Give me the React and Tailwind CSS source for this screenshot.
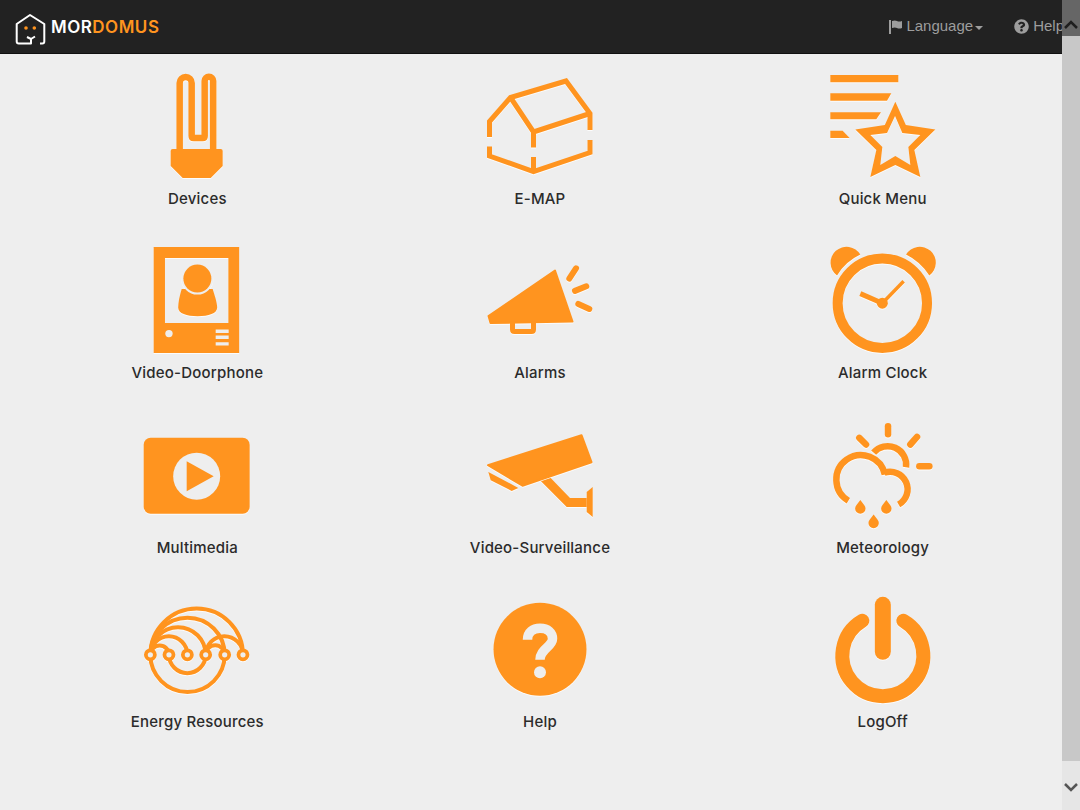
import { FaQuestionCircle } from 'react-icons/fa';

const ORANGE = '#ff941f';

// Each icon's viewBox origin is the spot its 140x124 box takes on the page
function Icon({ box, children }) {
  return (
    <svg
      width="140"
      height="124"
      viewBox={`${box[0]} ${box[1]} 140 124`}
      fill={ORANGE}
      stroke="none"
      className="block [filter:drop-shadow(0_1px_0_rgba(255,255,255,0.8))]"
    >
      {children}
    </svg>
  );
}

const Devices = () => (
  <Icon box={[127.33, 60]}>
    <path d="M180 152V83a6 6 0 0 1 12 0v53q0 2 2 2h9q2 0 2-2V81a4.25 4.25 0 0 1 8.5 0v71" fill="none" stroke={ORANGE} strokeWidth="6.500" />
    <path d="M173 149h48q2 0 2 2v15l-12 12h-28l-12-12v-15q0-2 2-2z" />
  </Icon>
);

const EMap = () => (
  <Icon box={[470, 60]}>
    <g fill="none" stroke={ORANGE} strokeWidth="5">
      <path d="M489.5 137v-15.5l21-24L566 81l24 32.5V130" />
      <path d="M510.5 97.500L533.500 132 590 113.500" />
      <path d="M533.500 131v16.500" />
      <path d="M489.500 146.500v9.500l44 15.500 56.500-19V140" />
      <path d="M533.500 157v15" />
    </g>
  </Icon>
);

const QuickMenu = () => (
  <Icon box={[812.67, 60]}>
    <path d="M830 75h68v7.300h-68z" />
    <path d="M830 93.300h61l-4.300 7.400H830z" />
    <path d="M830 112.300h50.700l-4.700 7H830z" />
    <path d="M830 130.700h12.300l7 7.300H830z" />
    <path
      fillRule="evenodd"
      d="M895 101.700l10.500 23.300 29.500 4.500-21 20.500 6 27-25-12-25 12 6-27-21-20.500 29.500-4.500zM894.700 116l-8 17-16.700 2 12 12-2 18 15-9 15 9-2-18 12-12-18-2z"
    />
  </Icon>
);

const VideoDoorphone = () => (
  <Icon box={[127.33, 234.4]}>
    <path fillRule="evenodd" d="M154 247.500h85.500v106H154zM165.300 258.500v65h63.400v-65z" />
    <path d="M182 289.500C180 296 178.500 303 178.500 308c0 6 8.500 8.700 19.500 8.700s19.500-2.700 19.500-8.700c0-5-2.500-12-4.500-18.500z" />
    <circle cx="197.700" cy="279" r="16" fill="#eee" />
    <circle cx="197.700" cy="279" r="14" />
    <circle cx="169.300" cy="334" r="3.700" fill="#eee" />
    <path d="M216 330h13v3.300h-13zM216 336h13v3.300h-13zM216 342.700h13v3.300h-13z" fill="#eee" />
  </Icon>
);

const Alarms = () => (
  <Icon box={[470, 234.4]}>
    <path d="M488.500 316.500L555 271l17.500 51-82 1.500z" stroke={ORANGE} strokeWidth="2" strokeLinejoin="round" />
    <path d="M512.500 323v7q0 2 2 2h17q2 0 2-2v-7" fill="none" stroke={ORANGE} strokeWidth="5" />
    <g fill="none" stroke={ORANGE} strokeWidth="6" strokeLinecap="round">
      <path d="M576 268.700L569.300 279" />
      <path d="M586.300 286.700L575 291.300" />
      <path d="M589.300 309.300L578.300 304.300" />
    </g>
  </Icon>
);

const AlarmClock = () => (
  <Icon box={[812.67, 234.4]}>
    <circle cx="882" cy="303.600" r="44.700" fill="none" stroke={ORANGE} strokeWidth="10" />
    <path d="M836.700 276A16 16 0 1 1 860 255Q845 262 836.700 276z" />
    <path d="M929 276A16 16 0 1 0 905.700 255Q920 262 929 276z" />
    <path d="M882 303.600L903.300 281.700" stroke={ORANGE} strokeWidth="3.500" fill="none" />
    <path d="M882 303.600L860 294" stroke={ORANGE} strokeWidth="5" fill="none" />
    <circle cx="882" cy="303.600" r="5.500" />
  </Icon>
);

const Multimedia = () => (
  <Icon box={[127.33, 408.8]}>
    <rect x="144" y="437.500" width="106" height="76" rx="7" />
    <circle cx="197" cy="476" r="23.500" fill="#eee" />
    <path d="M187 461l27 15-27 15z" />
  </Icon>
);

const Camera = () => (
  <Icon box={[470, 408.8]}>
    <path d="M488 465l93.500-30 10 27-69 23.500z" stroke={ORANGE} strokeWidth="2" strokeLinejoin="round" />
    <path d="M488.300 471.700l30 16-6.600 3-21-10.700z" />
    <path d="M541 481l9.700-3.300 19.300 20h16.700v9h-20z" />
    <path d="M586.700 491.700l6-5v30l-6-5z" />
  </Icon>
);

const drops = [[860, 508.300], [886, 508.300], [873.300, 522.700]];

const Meteorology = () => (
  <Icon box={[812.67, 408.8]}>
    <g fill="none" stroke={ORANGE} strokeWidth="6.500" strokeLinecap="round">
      <path d="M887.700 426v8" />
      <path d="M859 437.700l6.700 6.600" />
      <path d="M916.700 436.700l-6.700 7.600" />
      <path d="M919 466h10" />
    </g>
    <g fill="none" stroke={ORANGE} strokeWidth="6.500">
      <path d="M873.300 452.500A18.500 18.500 0 0 1 905.700 467" />
      <path d="M848 500.500A24.500 24.500 0 1 1 884.500 474.500" />
      <path d="M884 472.500A17.500 17.500 0 0 1 898.300 504.300" />
    </g>
    {drops.map(([x, y]) => (
      <path key={x} transform={`translate(${x} ${y})`} d="M0-8.500L3.800-3.500A5.200 5.200 0 1 1-3.800-3.500z" />
    ))}
  </Icon>
);

const nodes = [150.7, 169.3, 187.7, 206, 225, 243.3];

const Energy = () => (
  <Icon box={[127.33, 583.2]}>
    <g fill="none" stroke={ORANGE} strokeWidth="4">
      <path d="M150.700 655A46.300 46.300 0 0 1 243.300 655" />
      <path d="M150.700 655A37.150 37.150 0 0 1 225 655" />
      <path d="M150.700 655A27.650 27.650 0 0 1 206 655" />
      <path d="M150.700 655A18.500 18.500 0 0 1 187.700 655" />
      <path d="M150.700 655A9.300 9.300 0 0 1 169.300 655" />
      <path d="M150.700 655A37.150 37.150 0 0 0 225 655" />
      <path d="M169.300 655A18.350 18.350 0 0 0 206 655" />
      <path d="M206 655A18.650 18.650 0 0 1 243.300 655" />
      <path d="M206 655A9.500 9.500 0 0 1 225 655" />
      {nodes.map((x) => (
        <circle key={x} cx={x} cy="655" r="4.500" fill="#eee" strokeWidth="3.800" />
      ))}
    </g>
  </Icon>
);

const HelpIcon = () => (
  <Icon box={[470, 583.2]}>
    <circle cx="540" cy="649.500" r="46.500" />
    <path d="M527.500 640c0-8 5.500-11.500 12.500-11.500 8 0 12.500 4.500 12.500 10.500 0 8-12.500 10-12.500 21" fill="none" stroke="#eee" strokeWidth="9.500" />
    <circle cx="540" cy="672.500" r="6" fill="#eee" />
  </Icon>
);

const LogOff = () => (
  <Icon box={[812.67, 583.2]}>
    <path d="M862 621A40.500 40.500 0 1 0 903 621" fill="none" stroke={ORANGE} strokeWidth="14" strokeLinecap="round" />
    <path d="M882.500 605v47" fill="none" stroke={ORANGE} strokeWidth="16" strokeLinecap="round" />
  </Icon>
);

const tiles = [
  { name: 'Devices', icon: Devices },
  { name: 'E-MAP', icon: EMap },
  { name: 'Quick Menu', icon: QuickMenu },
  { name: 'Video-Doorphone', icon: VideoDoorphone },
  { name: 'Alarms', icon: Alarms },
  { name: 'Alarm Clock', icon: AlarmClock },
  { name: 'Multimedia', icon: Multimedia },
  { name: 'Video-Surveillance', icon: Camera },
  { name: 'Meteorology', icon: Meteorology },
  { name: 'Energy Resources', icon: Energy },
  { name: 'Help', icon: HelpIcon },
  { name: 'LogOff', icon: LogOff },
];

function Logo() {
  return (
    <svg width="46" height="46" viewBox="0 0 46 46" className="shrink-0" fill="none">
      <path
        d="M40 39.500h2.300q2 0 2-2V20L30 11 16.700 20v17.500q0 2 2 2H31V35l4-2.500M31 35l-4-2"
        stroke="#fff"
        strokeWidth="2"
        strokeLinejoin="round"
      />
      <circle cx="26" cy="24" r="1.800" fill={ORANGE} />
      <circle cx="34.300" cy="24" r="1.800" fill={ORANGE} />
    </svg>
  );
}

function Header() {
  return (
    <header className="flex h-[54px] items-center bg-[#222] border-b border-[#101010] font-['Liberation_Sans',sans-serif] text-[15px] text-[#9d9d9d]">
      <div className="flex items-center">
        <Logo />
        <span className="ml-[5px] mt-[2px] font-['Inter',sans-serif] text-[17px] font-semibold tracking-[0.5px] text-white">
          MOR<span className="text-[#ff941f]">DOMUS</span>
        </span>
      </div>
      <nav className="ml-auto mr-[16px] flex items-center">
        <svg width="14" height="14" viewBox="0 0 14 14" fill="#9d9d9d" className="mr-[3px]">
          <path d="M0 0h2v14H0zM3 1q3-1 5 0t5 0v7q-3 1-5 0t-5 0z" />
        </svg>
        <span>Language</span>
        <span className="ml-[2px] mt-[2px] h-0 w-0 border-x-4 border-t-4 border-x-transparent border-t-[#9d9d9d]" />
        <FaQuestionCircle className="ml-[31px] mr-[4px] text-[15px]" />
        <span>Help</span>
      </nav>
    </header>
  );
}

function Scrollbar() {
  return (
    <div className="absolute inset-y-0 right-0 flex w-[18px] flex-col bg-[#e6e6e6]">
      <div className="flex h-[36px] items-end justify-center bg-[#666] pb-[6px]">
        <svg width="14" height="10" viewBox="0 0 14 10" fill="none" stroke="#1f1f1f" strokeWidth="2.500">
          <path d="M1 8l6-6 6 6" />
        </svg>
      </div>
      <div className="h-[725px] bg-[#c8c8c8]" />
      <div className="flex flex-1 items-center justify-center pt-[3px]">
        <svg width="14" height="10" viewBox="0 0 14 10" fill="none" stroke="#555" strokeWidth="2.500">
          <path d="M1 2l6 6 6-6" />
        </svg>
      </div>
    </div>
  );
}

export default function App() {
  return (
    <div className="relative h-[810px] w-[1080px] overflow-hidden bg-[#eeeeee]">
      <Header />
      <main className="grid grid-cols-3 auto-rows-[174.4px] px-[26px] font-['Inter',sans-serif]">
        {tiles.map(({ name, icon: TileIcon }) => (
          <div key={name} className="flex flex-col items-center pt-[6px]">
            <TileIcon />
            <span className="mt-[7px] text-[15px] font-medium leading-[16px] tracking-[0.2px] text-[#2b2b2b]">
              {name}
            </span>
          </div>
        ))}
      </main>
      <Scrollbar />
    </div>
  );
}
